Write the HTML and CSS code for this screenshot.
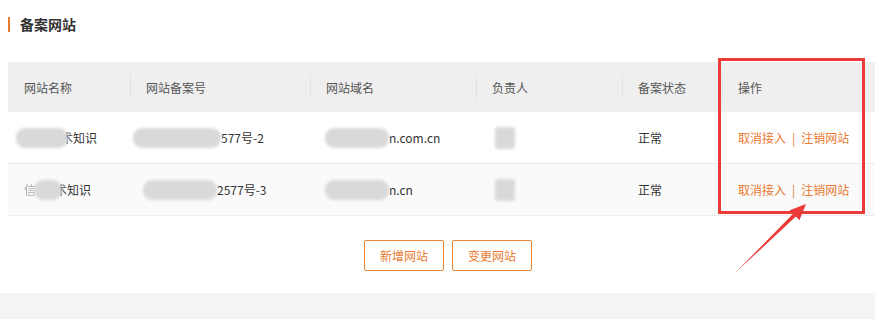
FILE: index.html
```html
<!DOCTYPE html>
<html lang="zh">
<head>
<meta charset="utf-8">
<title>备案网站</title>
<link rel="stylesheet" href="styles.css">
</head>
<body>
<div class="page">
  <div class="content">
    <h2 class="title">备案网站</h2>
    <div class="table">
      <div class="row head">
        <div class="cell">网站名称</div>
        <div class="cell sep">网站备案号</div>
        <div class="cell sep">网站域名</div>
        <div class="cell sep">负责人</div>
        <div class="cell sep">备案状态</div>
        <div class="cell sep">操作</div>
      </div>
      <div class="row">
        <div class="cell"><span class="blob b-name1"></span><span class="shift">术知识</span></div>
        <div class="cell"><span class="blob b-no1"></span>577号-2</div>
        <div class="cell"><span class="blob b-dom"></span>n.com.cn</div>
        <div class="cell"><span class="blob b-per"></span></div>
        <div class="cell">正常</div>
        <div class="cell ops"><a class="link">取消接入</a><span class="bar">|</span><a class="link">注销网站</a></div>
      </div>
      <div class="row alt">
        <div class="cell"><span class="ghost">信</span><span class="blob b-name2"></span><span class="shift">术知识</span></div>
        <div class="cell"><span class="blob b-no2"></span>2577号-3</div>
        <div class="cell"><span class="blob b-dom"></span>n.cn</div>
        <div class="cell"><span class="blob b-per"></span></div>
        <div class="cell">正常</div>
        <div class="cell ops"><a class="link">取消接入</a><span class="bar">|</span><a class="link">注销网站</a></div>
      </div>
    </div>
    <div class="actions">
      <button class="btn">新增网站</button>
      <button class="btn">变更网站</button>
    </div>
  </div>
  <div class="band"></div>
  <div class="mark-box"></div>
  <svg class="mark-arrow" width="875" height="319" viewBox="0 0 875 319">
    <polygon points="735,273 795.9,216.6 799.4,220.2 806,204 789.6,210.2 793.1,213.8" fill="#ea3a3a"/>
  </svg>
</div>
</body>
</html>
```
FILE: styles.css
```css
* { box-sizing: border-box; }
html, body { margin: 0; padding: 0; background: #fff; }
body {
  font-family: "Noto Sans CJK SC", "Microsoft YaHei", sans-serif;
  color: #333;
  width: 875px;
  height: 319px;
  overflow: hidden;
}
.page { position: relative; width: 875px; height: 319px; }
.content { padding: 17px 0 0 8px; }
.title {
  margin: 0;
  font-size: 14px;
  font-weight: bold;
  line-height: 15px;
  color: #333;
  border-left: 2px solid #e8792f;
  padding-left: 10px;
}
.table { margin-top: 30px; }
.row {
  display: grid;
  grid-template-columns: 122px 180px 166px 146px 100px 1fr;
  height: 52px;
  border-bottom: 1px solid #ececec;
  background: #fff;
  font-size: 12px;
}
.row.head { height: 50px; background: #efefef; border-bottom: none; color: #555; }
.row.alt { background: #fafafa; }
.cell {
  position: relative;
  display: flex;
  align-items: center;
  padding-left: 16px;
  white-space: nowrap;
}
.cell.sep::before {
  content: "";
  position: absolute;
  left: 0;
  top: 13px;
  height: 24px;
  width: 1px;
  background: #e2e2e2;
}
.blob {
  display: inline-block;
  height: 20px;
  background: #d9d9d9;
  border-radius: 9px;
  filter: blur(1.6px);
}
.b-name1 { width: 52px; margin-left: -8px; }
.b-name2 { width: 28px; margin-left: -2px; }
.b-no1 { width: 88px; margin-left: -13px; }
.b-no2 { width: 74px; margin-left: -3px; }
.b-dom { width: 64px; margin-left: -1px; }
.b-per { width: 20px; height: 22px; border-radius: 3px; margin-left: 3px; }
.shift { margin-left: -7px; }
.ghost { color: #aaa; filter: blur(0.5px); }
.ops { color: #e8792f; }
.link { color: #e8792f; text-decoration: none; }
.bar { margin: 0 6px; color: #e8792f; }
.actions {
  display: flex;
  justify-content: center;
  gap: 8px;
  margin-top: 24px;
  padding-left: 13px;
}
.btn {
  width: 80px;
  height: 31px;
  border: 1px solid #e58535;
  border-radius: 2px;
  background: #fff;
  color: #e8792f;
  font-family: "Noto Sans CJK SC", sans-serif;
  font-size: 12px;
  padding: 0;
}
.band {
  margin-top: 22px;
  height: 27px;
  background: #f4f4f4;
}
.mark-box {
  position: absolute;
  left: 718px;
  top: 58px;
  width: 147px;
  height: 156px;
  border: 3px solid #ea3a3a;
}
.mark-arrow { position: absolute; left: 0; top: 0; pointer-events: none; }
```
